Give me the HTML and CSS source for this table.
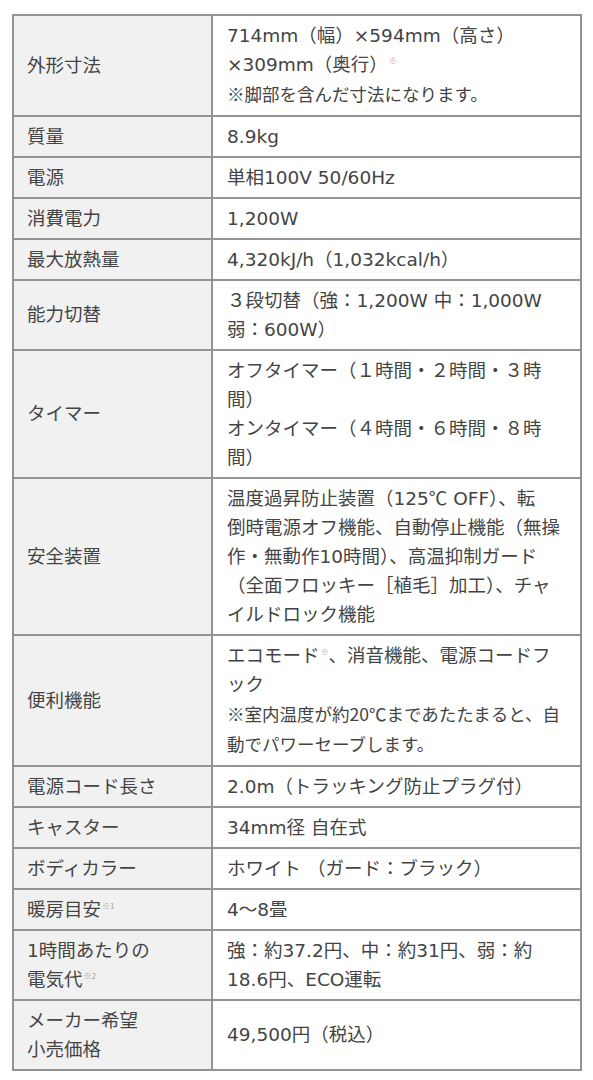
FILE: index.html
```html
<!DOCTYPE html>
<html lang="ja">
<head>
<meta charset="utf-8">
<title>仕様</title>
<link rel="stylesheet" href="styles.css">
</head>
<body>
<table class="spec">
  <tbody>
    <tr><th>外形寸法</th><td>714mm（幅）×594mm（高さ）<br>×309mm（奥行）<sup class="note">※</sup><span class="remark">※脚部を含んだ寸法になります。</span></td></tr>
    <tr><th>質量</th><td>8.9kg</td></tr>
    <tr><th>電源</th><td>単相100V 50/60Hz</td></tr>
    <tr><th>消費電力</th><td>1,200W</td></tr>
    <tr><th>最大放熱量</th><td>4,320kJ/h（1,032kcal/h）</td></tr>
    <tr><th>能力切替</th><td>３段切替（強：1,200W 中：1,000W<br>弱：600W）</td></tr>
    <tr><th>タイマー</th><td>オフタイマー（１時間・２時間・３時<br>間）<br>オンタイマー（４時間・６時間・８時<br>間）</td></tr>
    <tr><th>安全装置</th><td>温度過昇防止装置（125<span class="jp">℃</span> OFF）、転<br>倒時電源オフ機能、自動停止機能（無操<br>作・無動作10時間）、高温抑制ガード<br>（全面フロッキー［植毛］加工）、チャ<br>イルドロック機能</td></tr>
    <tr><th>便利機能</th><td>エコモード<sup class="note">※</sup>、消音機能、電源コードフ<br>ック<span class="remark">※室内温度が約20℃まであたたまると、自<br>動でパワーセーブします。</span></td></tr>
    <tr><th>電源コード長さ</th><td>2.0m（トラッキング防止プラグ付）</td></tr>
    <tr><th>キャスター</th><td>34mm径 自在式</td></tr>
    <tr><th>ボディカラー</th><td>ホワイト （ガード：ブラック）</td></tr>
    <tr><th>暖房目安<sup class="note">※1</sup></th><td>4〜8畳</td></tr>
    <tr><th>1時間あたりの<br>電気代<sup class="note">※2</sup></th><td>強：約37.2円、中：約31円、弱：約<br>18.6円、ECO運転</td></tr>
    <tr><th>メーカー希望<br>小売価格</th><td>49,500円（税込）</td></tr>
  </tbody>
</table>
</body>
</html>
```

FILE: styles.css
```css
html, body {
  margin: 0;
  padding: 0;
  background: #ffffff;
}

body {
  padding: 14px 11px 0 12px;
  font-family: "DejaVu Sans", "Noto Sans CJK JP", sans-serif;
  font-size: 18.5px;
  line-height: 29px;
  color: #444444;
}

.spec {
  border-collapse: separate;
  border-spacing: 0;
  width: 570px;
  table-layout: fixed;
  border-top: 2px solid #939393;
  border-left: 2px solid #939393;
}

.spec th,
.spec td {
  border-right: 2px solid #939393;
  border-bottom: 2px solid #939393;
  vertical-align: middle;
  text-align: left;
  font-weight: normal;
  padding: 5px 14px;
  white-space: nowrap;
}

.spec th {
  width: 199px;
  box-sizing: border-box;
  padding-left: 13px;
  background: #f1f1f1;
}

.spec td {
  background: #ffffff;
}

.jp {
  font-family: "Noto Sans CJK JP", sans-serif;
  line-height: 0;
}

.remark {
  display: block;
  font-family: "Noto Sans CJK JP", sans-serif;
  font-size: 17.5px;
  line-height: 30.5px;
}

.note {
  font-family: "Noto Sans CJK JP", sans-serif;
  font-size: 8px;
  line-height: 0;
  color: #a0a0a0;
  vertical-align: 7px;
  margin-left: 1px;
}
```
